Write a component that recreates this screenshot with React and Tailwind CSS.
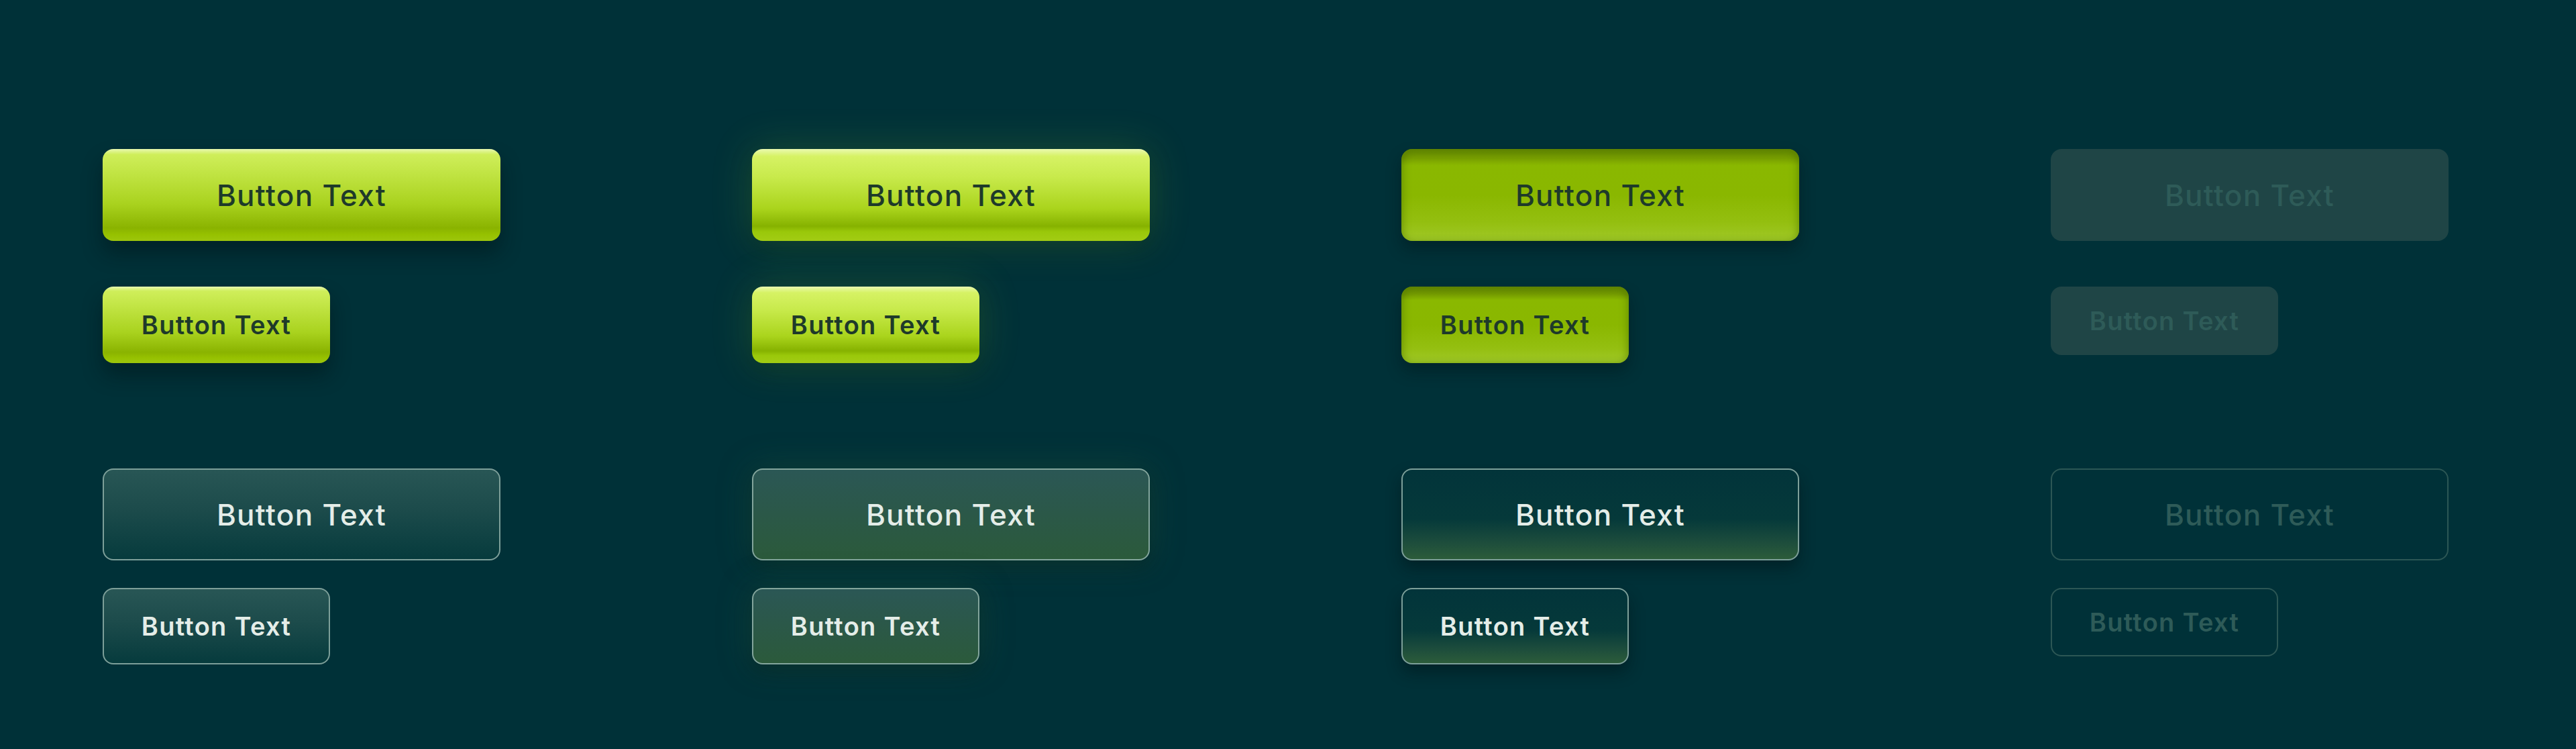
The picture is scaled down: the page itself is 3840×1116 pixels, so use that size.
import React from "react";

const font = { fontFamily: "Inter, 'Noto Sans', sans-serif" };

function Btn({ size, variant }) {
  const base =
    "flex items-center justify-center rounded-[16px] w-[593px] shrink-0 tracking-[1.3px]";
  const sizes = {
    lg: "h-[137px] text-[44px] font-medium w-[593px]",
    sm: "h-[114px] text-[38px] font-semibold !w-[339px]",
    smd: "h-[102px] text-[38px] font-semibold !w-[339px]",
  };
  const variants = {
    primary:
      "text-[#1e3a2a] bg-[linear-gradient(180deg,#e8f8b0_0%,#cfee5a_6%,#c2e545_25%,#a9d21e_60%,#8ab300_86%,#96c100_93%,#9dc60c_100%)] shadow-[0_18px_30px_rgba(0,18,20,0.45)]",
    hover:
      "text-[#1e3a2a] bg-[linear-gradient(180deg,#eaf9b0_0%,#d6f264_8%,#c8ea4c_30%,#aad41c_65%,#86b200_84%,#9ac80a_90%,#a2cc14_100%)] shadow-[0_0_60px_rgba(120,200,60,0.22),0_10px_30px_rgba(0,30,20,0.35)]",
    pressed:
      "text-[#1e3a2a] bg-[linear-gradient(180deg,#729900_0%,#789f00_10%,#8ab800_18%,#8ab700_50%,#94bf10_80%,#a0c828_100%)] shadow-[inset_0_8px_10px_rgba(70,100,0,0.35),inset_6px_0_10px_rgba(90,130,0,0.25),inset_-6px_0_10px_rgba(90,130,0,0.25),0_12px_22px_rgba(0,18,20,0.4)]",
    disabled: "text-[#2e5b58] bg-[#1f4546]",
    outline:
      "text-[#e4ede8] border-2 border-[#7d9f99] bg-[linear-gradient(180deg,#285655_0%,#1c4b4b_45%,#063b3d_100%)]",
    outlineHover:
      "text-[#e4ede8] border-2 border-[#83a59c] bg-[linear-gradient(180deg,#2b5755_0%,#2b5848_50%,#2b5a3b_100%)] shadow-[0_0_50px_rgba(40,100,70,0.35),0_10px_25px_rgba(0,20,20,0.35)]",
    outlinePressed:
      "text-[#e4ede8] border-2 border-[#7d9f99] bg-[linear-gradient(180deg,#02343a_0%,#05393a_55%,#1c4c3c_80%,#2c5c3a_100%)] shadow-[0_12px_22px_rgba(0,18,20,0.45)]",
    outlineDisabled: "text-[#2e5b58] border-2 border-[#2c5755]",
  };
  return (
    <div className={`${base} ${sizes[size]} ${variants[variant]}`} style={font}>
      Button Text
    </div>
  );
}

export default function App() {
  return (
    <div className="min-h-screen w-full bg-[#003138] pl-[153px] pt-[222px]">
      <div className="flex gap-[375px] items-start">
        <div className="flex flex-col gap-[68px]">
          <Btn size="lg" variant="primary" />
          <Btn size="sm" variant="primary" />
        </div>
        <div className="flex flex-col gap-[68px]">
          <Btn size="lg" variant="hover" />
          <Btn size="sm" variant="hover" />
        </div>
        <div className="flex flex-col gap-[68px]">
          <Btn size="lg" variant="pressed" />
          <Btn size="sm" variant="pressed" />
        </div>
        <div className="flex flex-col gap-[68px]">
          <Btn size="lg" variant="disabled" />
          <Btn size="smd" variant="disabled" />
        </div>
      </div>
      <div className="flex gap-[375px] items-start mt-[157px]">
        <div className="flex flex-col gap-[41px]">
          <Btn size="lg" variant="outline" />
          <Btn size="sm" variant="outline" />
        </div>
        <div className="flex flex-col gap-[41px]">
          <Btn size="lg" variant="outlineHover" />
          <Btn size="sm" variant="outlineHover" />
        </div>
        <div className="flex flex-col gap-[41px]">
          <Btn size="lg" variant="outlinePressed" />
          <Btn size="sm" variant="outlinePressed" />
        </div>
        <div className="flex flex-col gap-[41px]">
          <Btn size="lg" variant="outlineDisabled" />
          <Btn size="smd" variant="outlineDisabled" />
        </div>
      </div>
    </div>
  );
}
